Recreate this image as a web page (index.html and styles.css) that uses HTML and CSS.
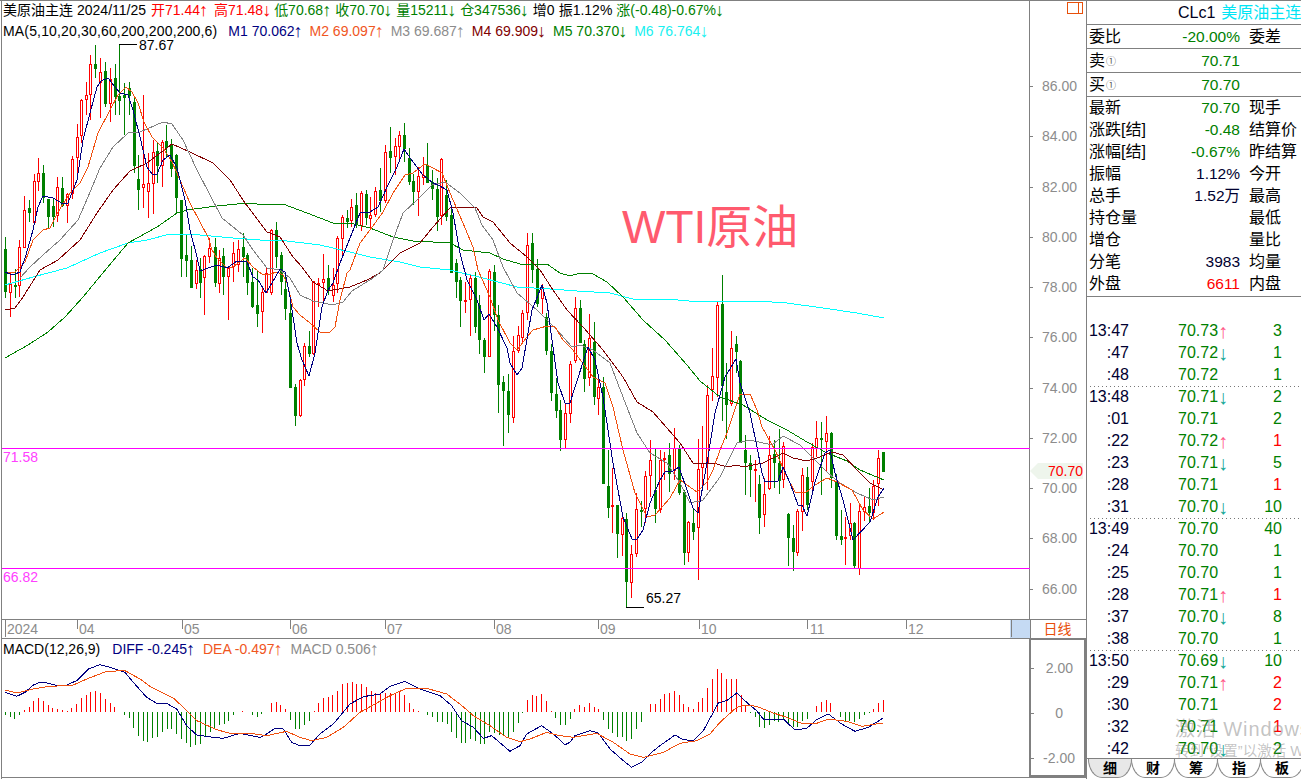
FILE: index.html
```html
<!DOCTYPE html>
<html lang="zh">
<head>
<meta charset="utf-8">
<title>美原油主连</title>
<link rel="stylesheet" href="styles.css">
</head>
<body>
<div class="app">
  <div class="main">
    <section class="price-row">
      <div class="plot-wrap">
        <svg class="plot" id="price" width="1028" height="618" viewBox="2 1 1028 618">
          <g id="candles"></g>
          <g id="mas"></g>
          <line class="level" x1="2" x2="1030" y1="448.5" y2="448.5"/>
          <line class="level" x1="2" x2="1030" y1="568.5" y2="568.5"/>
          <path class="leader" d="M119 44.5H137M626 607.5H644"/>
          <text class="lvl-text" x="3" y="462">71.58</text>
          <text class="lvl-text" x="3" y="582">66.82</text>
          <text class="peak" x="139" y="50">87.67</text>
          <text class="peak" x="646" y="603">65.27</text>
          <text class="stamp" x="622" y="243">WTI原油</text>
        </svg>
        <div class="legend">
          <div class="legend-row first">
            <span>美原油主连</span><span>2024/11/25</span>
            <span class="up">开71.44<i>↑</i></span>
            <span class="up">高71.48<i>↓</i></span>
            <span class="dn">低70.68<i>↑</i></span>
            <span class="dn">收70.70<i>↓</i></span>
            <span class="dn">量15211<i>↓</i></span>
            <span class="dn">仓347536<i>↓</i></span>
            <span>增0</span><span>振1.12%</span>
            <span class="dn">涨(-0.48)-0.67%<i>↓</i></span>
          </div>
          <div class="legend-row second">
            <span class="ma-name">MA(5,10,20,30,60,200,200,200,6)</span>
            <span class="m1">M1 70.062<i>↑</i></span>
            <span class="m2">M2 69.097<i>↑</i></span>
            <span class="m3">M3 69.687<i>↑</i></span>
            <span class="m4">M4 69.909<i>↓</i></span>
            <span class="m5">M5 70.370<i>↓</i></span>
            <span class="m6">M6 76.764<i>↓</i></span>
          </div>
        </div>
      </div>
      <svg class="axis" width="56" height="618" viewBox="1031 1 56 618">
        <rect class="corner" x="1068.5" y="2.5" width="15" height="11"/>
        <line class="corner-line" x1="1079.5" x2="1079.5" y1="2.5" y2="13.5"/>
        <path class="tick" d="M1031 86.5h3M1031 136.5h3M1031 187.5h3M1031 237.5h3M1031 287.5h3M1031 337.5h3M1031 388.5h3M1031 438.5h3M1031 488.5h3M1031 538.5h3M1031 589.5h3"/>
        <text class="ax" x="1078" y="91">86.00</text>
        <text class="ax" x="1078" y="141">84.00</text>
        <text class="ax" x="1078" y="192">82.00</text>
        <text class="ax" x="1078" y="242">80.00</text>
        <text class="ax" x="1078" y="292">78.00</text>
        <text class="ax" x="1078" y="342">76.00</text>
        <text class="ax" x="1078" y="393">74.00</text>
        <text class="ax" x="1078" y="443">72.00</text>
        <text class="ax" x="1078" y="493">70.00</text>
        <text class="ax" x="1078" y="543">68.00</text>
        <text class="ax" x="1078" y="594">66.00</text>
        <polygon class="tag" points="1031,471 1039,463 1084,463 1084,479 1039,479"/>
        <text class="tag-text" x="1084" y="476">70.70</text>
      </svg>
    </section>

    <section class="time-row">
      <svg class="time-plot" width="1028" height="18" viewBox="2 620 1028 18">
        <rect class="thumb" x="1010" y="620" width="20" height="18"/>
        <path class="tick" d="M5.5 620v17M77.5 620v9M182.5 620v9M290.5 620v9M385.5 620v9M494.5 620v9M598.5 620v9M699.5 620v9M807.5 620v9M906.5 620v9M1011.5 620v17"/>
        <text class="tm" x="7" y="634">2024</text>
        <text class="tm" x="79" y="634">04</text>
        <text class="tm" x="184" y="634">05</text>
        <text class="tm" x="292" y="634">06</text>
        <text class="tm" x="387" y="634">07</text>
        <text class="tm" x="496" y="634">08</text>
        <text class="tm" x="600" y="634">09</text>
        <text class="tm" x="701" y="634">10</text>
        <text class="tm" x="810" y="634">11</text>
        <text class="tm" x="908" y="634">12</text>
      </svg>
      <div class="period">日线</div>
    </section>

    <section class="macd-row">
      <div class="plot-wrap">
        <svg class="plot" id="macd" width="1027" height="138" viewBox="2 640 1027 138"></svg>
        <div class="legend-row macd-legend">
          <span class="macd-name">MACD(12,26,9)</span>
          <span class="m1">DIFF -0.245<i>↑</i></span>
          <span class="m2">DEA -0.497<i>↑</i></span>
          <span class="m3">MACD 0.506<i>↑</i></span>
        </div>
      </div>
      <svg class="axis-macd" width="53" height="135" viewBox="1032 640 53 135">
        <path class="tick" d="M1032 668.5h3M1032 713.5h3M1032 758.5h3"/>
        <text class="ax" x="1074" y="673">2.00</text>
        <text class="ax" x="1064" y="718">0</text>
        <text class="ax" x="1076" y="763">-2.00</text>
      </svg>
    </section>
  </div>

  <aside class="side">
    <header class="side-head"><span class="code">CLc1</span><span class="name">美原油主连</span></header>
    <div class="box-row"><span>委比</span><b class="dn">-20.00%</b><span class="c3">委差</span></div>
    <div class="box-row"><span>卖<small>①</small></span><b class="dn">70.71</b><span class="c3"></span></div>
    <div class="box-row"><span>买<small>①</small></span><b class="dn">70.70</b><span class="c3"></span></div>
    <div class="quotes">
      <div class="q-row"><span>最新</span><b class="dn">70.70</b><span class="c3">现手</span></div>
      <div class="q-row"><span>涨跌[结]</span><b class="dn">-0.48</b><span class="c3">结算价</span></div>
      <div class="q-row"><span>涨幅[结]</span><b class="dn">-0.67%</b><span class="c3">昨结算</span></div>
      <div class="q-row"><span>振幅</span><b class="navy">1.12%</b><span class="c3">今开</span></div>
      <div class="q-row"><span>总手</span><b class="navy">1.52万</b><span class="c3">最高</span></div>
      <div class="q-row"><span>持仓量</span><b></b><span class="c3">最低</span></div>
      <div class="q-row"><span>增仓</span><b></b><span class="c3">量比</span></div>
      <div class="q-row"><span>分笔</span><b class="navy">3983</b><span class="c3">均量</span></div>
      <div class="q-row"><span>外盘</span><b class="up">6611</b><span class="c3">内盘</span></div>
    </div>
    <div class="ticks">
      <div class="t-row"><span>13:47</span><span class="px">70.73<i class="au">↑</i></span><span class="dn">3</span></div>
      <div class="t-row"><span>:47</span><span class="px">70.72<i class="ad">↓</i></span><span class="dn">1</span></div>
      <div class="t-row"><span>:48</span><span class="px">70.72</span><span class="dn">1</span></div>
      <div class="t-row sep"><span>13:48</span><span class="px">70.71<i class="ad">↓</i></span><span class="dn">2</span></div>
      <div class="t-row"><span>:01</span><span class="px">70.71</span><span class="dn">2</span></div>
      <div class="t-row"><span>:22</span><span class="px">70.72<i class="au">↑</i></span><span class="up">1</span></div>
      <div class="t-row"><span>:23</span><span class="px">70.71<i class="ad">↓</i></span><span class="dn">5</span></div>
      <div class="t-row"><span>:28</span><span class="px">70.71</span><span class="up">1</span></div>
      <div class="t-row"><span>:31</span><span class="px">70.70<i class="ad">↓</i></span><span class="dn">10</span></div>
      <div class="t-row sep"><span>13:49</span><span class="px">70.70</span><span class="dn">40</span></div>
      <div class="t-row"><span>:24</span><span class="px">70.70</span><span class="dn">1</span></div>
      <div class="t-row"><span>:25</span><span class="px">70.70</span><span class="dn">1</span></div>
      <div class="t-row"><span>:28</span><span class="px">70.71<i class="au">↑</i></span><span class="up">1</span></div>
      <div class="t-row"><span>:37</span><span class="px">70.70<i class="ad">↓</i></span><span class="dn">8</span></div>
      <div class="t-row"><span>:38</span><span class="px">70.70</span><span class="dn">1</span></div>
      <div class="t-row sep"><span>13:50</span><span class="px">70.69<i class="ad">↓</i></span><span class="dn">10</span></div>
      <div class="t-row"><span>:29</span><span class="px">70.71<i class="au">↑</i></span><span class="up">2</span></div>
      <div class="t-row"><span>:30</span><span class="px">70.71</span><span class="up">2</span></div>
      <div class="t-row"><span>:32</span><span class="px">70.71</span><span class="up">1</span></div>
      <div class="t-row"><span>:42</span><span class="px">70.70<i class="ad">↓</i></span><span class="dn">2</span></div>
    </div>
    <nav class="tabs">
      <span class="tab active">细</span><span class="tab">财</span><span class="tab">筹</span><span class="tab">指</span><span class="tab">板</span>
    </nav>
    <div class="watermark">
      <div class="wm-1">激活 Windows</div>
      <div class="wm-2">转到“设置”以激活 Windows。</div>
    </div>
  </aside>
</div>
<script src="chart.js"></script>
</body>
</html>
```
FILE: styles.css
```css
* { box-sizing: border-box; }
html, body { margin: 0; padding: 0; background: #fff; overflow: hidden; }
body { width: 1301px; height: 780px; font-family: "Liberation Sans", "Noto Sans CJK SC", sans-serif; font-size: 14px; color: #000; }
i { font-style: normal; }
svg { display: block; }

.app { display: flex; width: 1301px; height: 779px; border-top: 1px solid #808080; }
.main { margin-left: 1px; width: 1085px; flex: none; border-left: 1px solid #808080; }

.price-row { display: flex; height: 619px; border-bottom: 1px solid #808080; }
.plot-wrap { position: relative; flex: none; }
.plot { shape-rendering: crispEdges; }
.axis { flex: none; box-shadow: -1px 0 0 #808080; }

.legend { position: absolute; left: 1px; top: 0; }
.legend-row { display: flex; height: 22px; line-height: 19px; white-space: nowrap; }
.first { gap: 4px; }
.first span:nth-child(3) { margin-left: 1px; }
.first span:nth-child(4) { margin-left: 2px; }
.first span:nth-child(5) { margin-left: -1px; }
.second { gap: 7px; height: 22px; line-height: 17px; }
.ma-name { letter-spacing: .16px; margin-right: 4px; }
.up { color: #ff0000; }
.dn { color: #008000; }
.navy { color: #000030; }
.m1 { color: #000080; }
.m2 { color: #f0561e; }
.m3 { color: #8c8c8c; }
.m4 { color: #800000; }
.m5 { color: #008000; }
.m6 { color: #19f0f0; }
.legend-row i { display: inline-block; width: 9px; text-align: center; margin-left: -1px; font-size: 18px; line-height: 0; vertical-align: -1px; }

.level { stroke: #ff00ff; stroke-width: 1; }
.leader { stroke: #000; stroke-width: 1; fill: none; }
.lvl-text { font-size: 14px; fill: #ff40ff; }
.peak { font-size: 14px; fill: #000; }
.stamp { font-size: 46px; fill: #ff5a6e; font-family: "Liberation Sans", "Noto Sans CJK SC", sans-serif; }

.tick { stroke: #808080; stroke-width: 1; fill: none; shape-rendering: crispEdges; }
.ax { font-size: 14px; fill: #8c8c8c; text-anchor: end; }
.corner { fill: none; stroke: #e8500a; shape-rendering: crispEdges; }
.corner-line { stroke: #e8500a; shape-rendering: crispEdges; }
.tag { fill: #eef5ec; }
.tag-text { font-size: 14px; fill: #ff0000; text-anchor: end; }

.time-row { display: flex; height: 19px; border-bottom: 1px solid #808080; }
.time-plot { flex: none; }
.thumb { fill: #c5daf3; }
.tm { font-size: 14px; fill: #8c8c8c; }
.period { flex: none; width: 56px; border-left: 1px solid #808080; text-align: center; color: #e8500a; line-height: 18px; padding-right: 2px; font-size: 14px; }

.macd-row { display: flex; height: 139px; border-bottom: 1px solid #808080; }
.macd-legend { position: absolute; left: 1px; top: 0; gap: 8px; line-height: 21px; }
.macd-name { margin-right: 4px; }
.axis-macd { flex: none; border: 2px solid #808080; width: 57px; height: 139px; margin-top: -1px; }

.side { position: relative; flex: 1; min-width: 0; border-left: 1px solid #808080; overflow: hidden; font-size: 16px; }
.side-head { height: 24px; border-bottom: 1px solid #808080; padding-left: 91px; line-height: 23px; white-space: nowrap; display: flex; gap: 6px; }
.code { color: #000020; }
.name { color: #00e5f5; }
.box-row, .q-row { display: grid; grid-template-columns: 71px 80px 1fr; padding-left: 2px; white-space: nowrap; }
.box-row { height: 24px; border-bottom: 1px solid #808080; line-height: 23px; }
.box-row b, .q-row b { font-weight: normal; text-align: right; font-size: 15.5px; }
.c3 { padding-left: 9px; }
small { font-size: 10px; color: #555; margin-left: 1px; vertical-align: 1px; }
.quotes { height: 200px; border-bottom: 1px solid #808080; }
.q-row { height: 22px; line-height: 21px; }
.ticks { padding-top: 23px; }
.t-row { display: grid; grid-template-columns: 42px 104px 49px; height: 22px; line-height: 21px; }
.t-row > span:first-child { text-align: right; color: #000030; }
.t-row > span:last-child { text-align: right; }
.px { padding-left: 49px; color: #008000; white-space: nowrap; }
.px i { display: inline-block; width: 9px; text-align: center; font-size: 20px; line-height: 0; vertical-align: -2px; }
.au { color: #ff5a88; }
.ad { color: #18a898; }
.sep { background: repeating-linear-gradient(90deg, #777 0 1px, transparent 1px 4px) 3px 0 / 100% 1px no-repeat; }

.tabs { position: absolute; left: 0; right: 0; top: 757px; height: 20px; border-top: 1px solid #808080; display: flex; padding-left: 1px; }
.tab { width: 44px; margin-right: -1px; flex: none; height: 19px; border: 1px solid #8a8a8a; border-top: 0; border-radius: 0 0 14px 14px / 0 0 19px 19px; text-align: center; font-size: 14px; line-height: 18px; font-weight: bold; background: #fff; }
.tab.active { background: #e8e8e8; }

.watermark { position: absolute; left: 88px; top: 716px; color: rgba(110, 110, 110, .42); white-space: nowrap; pointer-events: none; }
.wm-1 { font-size: 20px; line-height: 24px; letter-spacing: .9px; }
.wm-2 { font-size: 14.5px; line-height: 20px; }
```
FILE: chart.js
```javascript
// x, red?, bodyTop, bodyBottom, high, low (all in page pixels)
var C = [
[5,0,249,291,237,298],[10,1,284,292,273,317],[15,0,285,286,269,298],[19,1,247,285,240,297],[24,1,210,247,196,247],
[29,0,208,212,200,222],[34,1,181,222,174,223],[38,1,173,181,158,191],[43,0,173,197,165,203],[48,0,199,216,199,228],
[53,0,206,216,198,227],[57,1,187,215,177,222],[62,0,188,205,177,207],[67,1,194,205,193,223],[72,1,159,193,156,199],
[77,1,137,157,124,175],[81,1,100,135,99,143],[86,1,95,99,82,115],[90,1,64,94,55,120],[95,0,64,68,45,78],
[100,1,72,82,58,118],[105,0,71,103,62,107],[110,1,79,103,68,122],[115,0,78,96,64,115],[119,0,96,100,44,115],
[124,0,95,97,83,135],[129,0,88,95,82,115],[134,0,102,165,98,173],[138,0,179,189,155,210],[143,1,184,187,95,208],
[148,1,183,191,153,218],[153,1,152,183,140,214],[157,0,151,165,143,183],[162,1,142,165,140,187],[166,0,141,147,125,157],
[171,0,145,168,139,177],[176,0,155,197,154,213],[181,0,200,258,200,277],[186,0,255,260,235,277],[191,0,260,287,246,288],
[196,1,270,283,260,289],[200,0,269,282,258,298],[204,1,256,277,255,315],[209,1,248,256,238,263],[215,0,247,282,238,287],
[219,1,258,283,250,293],[223,0,256,276,248,295],[228,1,268,276,266,320],[233,1,253,266,242,282],[238,1,249,264,240,272],
[243,0,247,256,233,277],[247,0,255,282,253,295],[252,0,282,306,268,308],[257,0,305,313,270,327],[262,1,292,311,287,333],
[266,1,273,292,268,293],[271,1,230,292,229,295],[276,0,230,256,222,268],[281,0,255,281,252,295],[285,0,289,308,275,320],
[290,0,313,387,299,387],[295,0,387,415,384,426],[300,1,380,415,379,417],[304,1,346,379,343,386],[309,0,346,353,331,357],
[313,1,281,353,281,355],[318,1,283,284,278,307],[323,1,279,282,254,303],[328,0,278,289,265,295],[333,1,285,295,268,302],
[337,1,238,283,236,293],[342,1,217,238,215,257],[347,0,218,221,210,228],[351,1,207,220,199,227],[356,0,205,223,193,228],
[361,1,193,225,191,231],[366,0,194,217,190,225],[370,1,215,218,197,228],[375,1,191,214,187,217],[380,0,190,200,168,212],
[385,1,152,200,145,203],[390,0,151,157,127,173],[395,1,146,156,138,175],[399,1,135,146,131,160],[404,0,135,148,123,162],
[409,0,158,181,148,185],[413,0,181,191,174,205],[418,1,176,191,167,216],[423,1,175,177,157,185],[427,0,165,182,143,183],
[432,0,182,188,170,200],[437,0,189,216,178,231],[441,1,159,215,158,225],[446,0,195,216,180,221],[451,0,215,272,208,272],
[456,0,263,281,259,298],[460,0,280,300,277,327],[465,1,300,301,282,313],[470,1,278,299,275,336],[475,0,278,326,272,333],
[479,0,305,339,295,354],[484,0,340,356,338,373],[489,1,271,356,269,357],[494,0,272,314,265,331],[498,0,315,384,305,413],
[503,0,382,390,376,446],[508,0,391,414,374,433],[513,1,351,417,336,423],[518,1,335,350,326,353],[522,1,313,337,310,343],
[527,1,245,312,233,320],[532,0,243,269,233,283],[537,0,269,303,259,307],[542,1,287,298,284,314],[546,0,317,350,313,355],
[551,0,351,392,344,401],[556,0,394,410,378,418],[560,0,410,439,400,451],[565,1,413,439,403,448],[570,1,364,413,361,423],
[575,1,308,360,297,363],[580,0,308,342,300,343],[584,0,344,378,340,392],[589,1,338,377,314,386],[594,0,342,396,322,405],
[598,1,387,398,378,415],[603,0,387,483,377,483],[608,0,486,507,450,518],[612,1,505,506,468,533],[617,0,505,533,505,558],
[622,1,518,534,513,556],[626,0,519,581,513,607],[631,1,554,582,545,598],[636,1,509,553,493,557],[641,0,510,511,501,527],
[645,1,476,508,471,523],[650,1,460,475,440,497],[655,0,490,508,449,523],[660,1,460,509,450,513],[664,1,458,459,452,480],
[669,0,455,473,443,492],[674,1,448,470,428,480],[679,0,448,492,445,495],[684,0,492,552,490,565],[688,1,522,552,521,562],
[693,0,523,531,508,540],[698,1,469,527,439,580],[702,1,463,467,426,488],[707,1,395,463,385,490],[712,1,376,389,348,401],
[717,1,305,377,302,397],[722,0,304,385,275,421],[726,0,392,404,363,439],[731,1,348,403,331,406],[736,0,344,351,336,373],
[740,0,361,442,360,442],[745,0,450,462,435,495],[750,0,463,469,455,497],[755,1,469,470,460,502],[759,0,484,517,475,534],
[764,1,494,514,478,527],[769,1,455,488,436,490],[774,0,454,462,440,488],[779,0,463,480,429,494],[783,1,446,479,442,488],
[788,0,514,537,513,566],[793,0,538,551,525,571],[797,1,511,552,509,556],[802,1,475,511,468,531],[807,0,477,504,467,510],
[812,1,447,481,443,490],[816,1,438,447,421,457],[821,0,438,439,422,495],[826,1,433,441,416,472],[831,0,433,477,432,488],
[836,0,482,535,474,540],[841,0,536,539,510,545],[845,1,537,538,517,565],[850,1,523,535,503,540],[854,0,523,565,522,568],
[859,1,511,568,504,575],[864,1,507,511,497,521],[869,0,506,512,488,523],[873,1,486,512,480,520],[878,1,458,483,450,506],
[883,0,452,471,452,471]
];
var MA = [
{c:'#00ffff',p:"5,285 33,277 67,268 100,253 128,243 147,240 170,234 200,235 233,238 260,240 287,241 320,245 350,252 370,257 400,262 420,267 450,270 483,278 517,287 550,289 577,291 610,293 633,299 667,299 700,302 723,301 757,301 787,303 823,308 857,313 884,318"},
{c:'#008000',p:"5,358 28,345 48,332 65,317 83,297 107,268 128,243 157,227 177,213 187,210 217,206 247,203 267,205 283,204 307,213 333,223 350,223 370,228 393,237 413,241 433,242 450,243 463,250 490,253 503,259 520,264 547,264 560,273 570,276 580,273 593,274 607,282 623,297 643,320 665,340 687,365 700,381 720,397 743,405 767,420 787,430 807,442 827,453 847,461 860,470 884,480"},
{c:'#800000',p:"5,310 15,308 23,297 40,270 58,260 80,240 97,213 113,190 130,171 147,163 172,144 190,152 213,163 230,180 245,203 267,232 280,237 293,257 302,267 313,282 328,291 350,287 367,280 380,273 400,253 420,243 433,227 450,208 457,207 477,208 483,217 493,222 510,243 527,257 540,270 553,290 567,310 583,327 603,350 623,377 637,402 653,412 680,443 693,463 717,464 727,467 737,465 743,467 763,463 783,453 793,458 807,461 820,457 832,452 843,455 857,470 870,483 884,490"},
{c:'#808080',p:"20,278 30,267 43,255 60,240 78,220 88,197 100,168 113,147 128,133 140,132 163,122 172,124 183,140 197,170 210,195 222,218 243,235 253,250 267,268 280,270 290,278 300,295 313,301 333,305 343,302 352,291 373,278 383,270 392,243 403,213 417,200 432,185 445,182 460,193 475,208 482,225 493,240 503,267 517,293 537,310 557,330 572,347 580,345 593,350 610,363 623,397 637,433 650,453 667,463 680,483 690,503 703,500 720,477 737,443 750,440 772,445 783,436 800,445 808,453 828,473 840,483 857,493 873,500 884,497"},
{c:'#f0500f',p:"5,272 15,272 25,262 33,240 43,230 50,228 58,212 70,193 80,183 88,167 98,133 110,110 118,95 126,87 132,92 138,103 144,122 152,137 163,148 172,162 180,180 190,203 200,222 208,237 212,250 217,258 227,268 233,267 245,258 253,267 263,275 270,274 277,272 283,275 287,283 293,307 300,315 310,323 320,332 330,332 335,327 340,300 347,273 350,270 360,243 370,230 383,212 393,193 405,175 413,173 425,164 433,168 442,173 450,193 463,223 473,247 478,270 490,297 498,320 510,343 517,350 527,337 533,330 547,326 555,327 563,340 573,350 593,377 605,383 613,407 623,450 635,493 647,517 655,515 670,498 680,480 697,492 707,482 713,470 720,450 727,433 740,394 750,394 757,410 762,427 775,450 787,477 795,492 805,493 815,485 827,478 837,482 852,490 863,510 873,519 884,512"},
{c:'#000080',p:"5,272 10,274 15,274 20,272 26,255 33,230 38,207 43,196 53,198 63,204 68,203 77,180 83,140 90,113 97,87 101,81 108,78 115,87 120,93 128,95 133,110 140,137 147,167 152,174 157,174 163,160 170,155 177,168 185,200 190,230 197,257 200,271 208,268 217,265 227,268 237,261 247,262 253,277 258,280 266,293 272,283 280,269 285,272 290,297 297,343 302,360 309,376 315,353 322,307 328,290 333,283 340,263 350,238 360,213 370,212 378,207 387,187 397,167 404,149 413,162 423,175 433,183 438,185 447,190 453,213 460,253 467,280 477,300 484,320 489,314 497,327 507,348 510,363 517,375 522,368 532,310 542,285 547,303 552,340 558,383 565,403 570,403 575,387 588,347 595,360 603,397 613,463 623,517 632,539 637,539 643,530 650,503 660,480 665,472 673,471 679,467 687,490 693,508 698,513 708,457 715,413 725,377 736,359 740,383 750,413 757,447 762,473 765,482 778,481 783,467 790,483 798,505 802,505 807,516 815,482 825,453 830,450 835,473 843,500 853,540 870,522 878,497 884,488"}
];
var BARS = [[16,-8],[30,-14],[44,-20],[58,-10],[73,6],[87,14],[101,32],[115,42],[130,33],[145,21],[158,12],[172,10],[187,7],[201,4],[215,11],[230,24],[244,42],[258,50],[272,60],[286,64],[300,56],[316,38],[330,28],[344,16],[373,-8],[387,-18],[401,-48],[415,-72],[430,-87],[443,-90],[458,-78],[472,-74],[487,-60],[501,-50],[515,-52],[530,-66],[544,-80],[558,-94],[572,-104],[587,-100],[601,-95],[615,-75],[630,-60],[644,-50],[658,-40],[672,-36],[686,-28],[700,-10],[728,4],[757,-10],[771,-15],[785,-7],[815,26],[828,31],[842,22],[857,8],[871,-24],[885,-52],[899,-50],[914,-38],[928,-28],[942,4],[956,28],[970,42],[985,46],[998,50],[1012,62],[1027,83],[1042,88],[1056,91],[1070,85],[1085,85],[1100,75],[1114,62],[1127,57],[1142,57],[1157,58],[1170,58],[1185,57],[1199,62],[1213,50],[1227,28],[1241,8],[1256,3],[1283,-8],[1297,-16],[1312,-30],[1326,-30],[1341,-36],[1355,-60],[1369,-78],[1383,-92],[1397,-92],[1411,-82],[1425,-88],[1440,-95],[1454,-96],[1468,-60],[1483,-62],[1497,-68],[1511,-72],[1525,-78],[1540,-60],[1554,-32],
[1568,-4],[1582,35],[1597,50],[1610,48],[1625,53],[1639,32],[1654,3],[1667,-17],[1681,-40],[1696,-40],[1711,-22],[1723,10],[1738,20],[1753,14],[1768,26],[1782,15],[1796,8],[1810,-25],[1825,-52],[1838,-64],[1852,-76],[1866,-74],[1880,-88],[1894,-80],[1910,-52],[1924,-30],[1951,23],[1966,23],[1981,40],[1993,55],[2009,58],[2024,64],[2038,52],[2051,25],[2065,16],[2080,10],[2095,30],[2108,42],[2122,73],[2137,100],[2152,130],[2165,118],[2180,100],[2195,100],[2209,98],[2223,50],[2237,22],[2251,-2],[2265,-15],[2279,-44],[2293,-48],[2308,-38],[2322,-28],[2336,-30],[2350,-20],[2365,-35],[2379,-46],[2393,-44],[2407,-26],[2422,-22],[2449,19],[2464,29],[2479,37],[2491,26],[2521,-15],[2535,-28],[2549,-28],[2564,-30],[2578,-22],[2593,-10],[2607,-3],[2621,8],[2635,26],[2650,35]];
var DIFF = "16,280 30,285 50,292 75,280 100,258 120,250 140,252 165,258 200,258 230,245 265,210 300,197 330,205 375,220 400,250 440,295 470,313 500,313 530,330 560,380 590,408 640,415 670,418 720,403 780,415 800,405 825,388 850,390 875,430 900,440 930,438 960,405 1000,375 1050,315 1090,293 1140,285 1170,262 1215,247 1260,270 1320,290 1355,320 1385,365 1420,385 1450,418 1475,410 1530,457 1560,440 1580,405 1625,380 1660,405 1695,437 1710,430 1725,410 1770,395 1795,402 1830,450 1870,485 1895,505 1925,490 1955,460 1980,440 2025,408 2050,422 2080,425 2110,395 2155,312 2180,305 2210,282 2240,310 2270,335 2290,360 2320,360 2350,360 2385,393 2420,388 2450,362 2485,345 2525,375 2565,397 2605,385 2648,358";
var DEA = "16,273 50,282 100,270 140,263 220,258 260,240 320,217 375,215 420,240 450,262 520,297 550,325 590,365 650,392 690,403 750,403 800,410 860,397 900,415 935,425 980,415 1030,385 1080,340 1170,290 1220,268 1280,268 1340,285 1380,315 1420,350 1470,380 1520,415 1560,428 1590,420 1640,400 1680,410 1720,415 1790,403 1840,430 1890,465 1930,475 1990,460 2040,433 2090,425 2130,405 2160,370 2210,325 2240,318 2270,322 2320,342 2360,355 2410,375 2450,373 2485,360 2540,367 2585,382 2648,372";

var NS = 'http://www.w3.org/2000/svg';
function el(parent, name, attrs) {
  var n = document.createElementNS(NS, name);
  for (var k in attrs) n.setAttribute(k, attrs[k]);
  parent.appendChild(n);
  return n;
}
var candles = document.getElementById('candles');
C.forEach(function (k) {
  var x = Math.floor(k[0]) + 0.5, col = k[1] ? '#ff0000' : '#008000';
  el(candles, 'path', { d: 'M' + x + ' ' + k[4] + 'V' + k[5], stroke: col, fill: 'none' });
  el(candles, 'rect', { x: x - 1, y: k[2] + 0.5, width: 2, height: Math.max(k[3] - k[2], 1), stroke: col, fill: k[1] ? '#fff' : col });
});
var mas = document.getElementById('mas');
MA.forEach(function (m) {
  el(mas, 'polyline', { points: m.p, fill: 'none', stroke: m.c, 'stroke-width': 1 });
});

var macd = document.getElementById('macd');
BARS.forEach(function (b) {
  var x = Math.floor(b[0] / 3) + 0.5, h = b[1] / 3;
  el(macd, 'line', { x1: x, x2: x, y1: 713, y2: 713 - h, stroke: h > 0 ? '#ff0000' : '#008000' });
});
function scale(s) {
  return s.split(' ').map(function (p) {
    var a = p.split(',');
    return (a[0] / 3) + ',' + (600 + a[1] / 3);
  }).join(' ');
}
el(macd, 'polyline', { points: scale(DIFF), fill: 'none', stroke: '#000080' });
el(macd, 'polyline', { points: scale(DEA), fill: 'none', stroke: '#f0500f' });
```
